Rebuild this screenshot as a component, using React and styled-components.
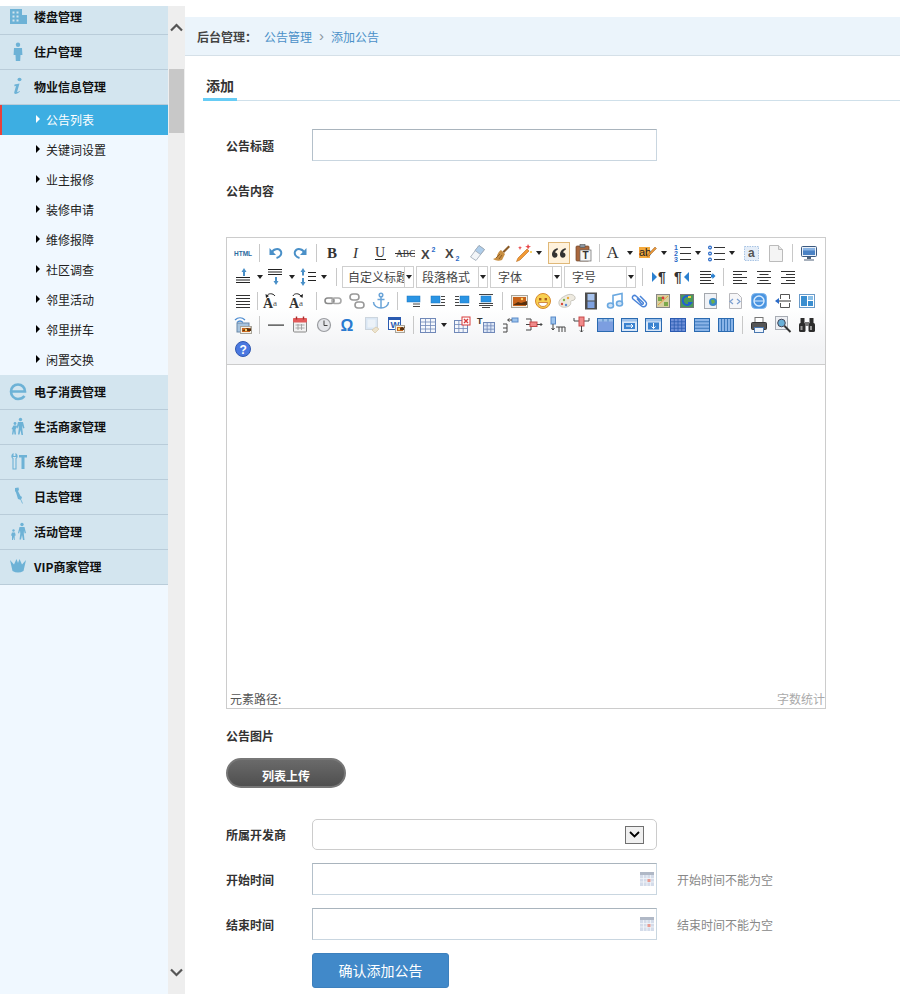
import React from "react";
import styled, { createGlobalStyle } from "styled-components";

const FONT = '"Noto Sans CJK SC", "Liberation Sans", sans-serif';

const GlobalStyle = createGlobalStyle`
  html, body {
    margin: 0;
    padding: 0;
    background: #fff;
  }
  body {
    font-family: ${FONT};
    font-size: 12px;
    color: #333;
  }
  * {
    box-sizing: border-box;
  }
`;

// Layout
const Page = styled.div`
  display: flex;
  width: 900px;
  height: 1000px;
  padding: 6px 0;
  overflow: hidden;
`;
const Sidebar = styled.aside`
  width: 168px;
  background: #f0f8ff;
  overflow: hidden;
`;
const MenuList = styled.div`
  margin-top: -6px;
`;
const MenuHeader = styled.div`
  display: flex;
  align-items: center;
  height: 35px;
  padding: 0 0 2px 9px;
  background: #d3e5ef;
  border-bottom: 1px solid #b9ccd9;
  font-weight: 700;
  color: #111;
`;
const MenuIcon = styled.span`
  display: flex;
  width: 25px;
  flex: none;
`;
const MenuItem = styled.div`
  display: flex;
  align-items: center;
  height: 30px;
  padding-bottom: 2px;
  padding-left: ${(p) => (p.$active ? "34px" : "36px")};
  background: ${(p) => (p.$active ? "#3daee2" : "transparent")};
  border-left: ${(p) => (p.$active ? "2px solid #e8403a" : "none")};
  color: ${(p) => (p.$active ? "#fff" : "#222")};
  &::before {
    content: "";
    width: 0;
    height: 0;
    margin-right: 6px;
    border-left: 4px solid ${(p) => (p.$active ? "#fff" : "#000")};
    border-top: 4px solid transparent;
    border-bottom: 4px solid transparent;
  }
`;
const ScrollTrack = styled.div`
  display: flex;
  flex-direction: column;
  justify-content: space-between;
  width: 17px;
  background: #eeeeee;
`;
const ScrollButton = styled.div`
  display: flex;
  align-items: center;
  justify-content: center;
  height: 43px;
`;
const ScrollThumb = styled.div`
  width: 15px;
  height: 64px;
  margin: 20px 1px 0;
  background: #c8c8c8;
`;
const ScrollGap = styled.div`
  flex: 1;
`;
const Main = styled.main`
  flex: 1;
  padding-top: 11px;
`;
const Breadcrumb = styled.div`
  display: flex;
  align-items: center;
  height: 39px;
  padding-left: 12px;
  background: #ebf4fb;
  border-bottom: 1px solid #d5e0e8;
  color: #4a90c8;
`;
const CrumbLead = styled.strong`
  width: 67px;
  color: #444;
`;
const CrumbSep = styled.span`
  width: 19px;
  text-align: center;
  font-size: 15px;
  line-height: 12px;
  color: #8a94a0;
  font-family: "Liberation Sans", sans-serif;
`;
const TabBar = styled.div`
  display: flex;
  height: 45px;
  margin-left: 18px;
  align-items: flex-end;
  border-bottom: 1px solid #cfe0ea;
`;
const Tab = styled.div`
  width: 34px;
  height: 30px;
  margin-bottom: -1px;
  padding-top: 4px;
  border-bottom: 3px solid #66ccf5;
  text-align: center;
  font-size: 14px;
  font-weight: 700;
  line-height: 21px;
  color: #333;
`;
const Form = styled.form`
  padding: 28px 0 0 41px;
`;
const FieldRow = styled.div`
  display: flex;
  align-items: center;
  margin-top: ${(p) => p.$top ?? 13}px;
`;
const Label = styled.label`
  width: 86px;
  flex: none;
  font-weight: 700;
  color: #333;
`;
const BlockLabel = styled.div`
  margin-top: ${(p) => p.$top}px;
  font-weight: 700;
  line-height: 16px;
  color: #333;
`;
const InputBox = styled.div`
  display: flex;
  align-items: center;
  width: 345px;
  height: 32px;
  padding-right: 2px;
  border: 1px solid #c9d6e0;
  border-top-color: #a9b4bd;
  border-left-color: #b4c0ca;
`;
const TextInput = styled.input`
  flex: 1;
  min-width: 0;
  height: 100%;
  border: none;
  outline: none;
  background: transparent;
`;
const SelectBox = styled.div`
  display: flex;
  align-items: center;
  width: 345px;
  height: 31px;
  padding-right: 12px;
  border: 1px solid #cccccc;
  border-radius: 5px;
`;
const SelectInput = styled.select`
  flex: 1;
  height: 100%;
  border: none;
  outline: none;
  background: transparent;
  appearance: none;
`;
const SelectArrow = styled.span`
  display: flex;
  align-items: center;
  justify-content: center;
  width: 19px;
  height: 18px;
  border: 1px solid #707070;
  background: #f0f0f0;
`;
const Hint = styled.span`
  margin-left: 20px;
  color: #888;
`;
const UploadButton = styled.button`
  display: block;
  width: 120px;
  height: 30px;
  margin-top: 14px;
  padding: 4px 0 0;
  border: 2px solid #777;
  border-radius: 15px;
  background: linear-gradient(#6a6a6a, #4f4f4f);
  color: #fff;
  font: 700 12px ${FONT};
`;
const SubmitButton = styled.button`
  display: block;
  width: 137px;
  height: 35px;
  margin: 13px 0 0 86px;
  padding: 0 0 2px;
  border: 1px solid #3d80bd;
  border-radius: 3px;
  background: #4189c9;
  color: #fff;
  font: 14px ${FONT};
`;

// Editor
const Editor = styled.div`
  display: flex;
  flex-direction: column;
  width: 600px;
  height: 472px;
  margin-top: 38px;
  border: 1px solid #cccccc;
`;
const Toolbar = styled.div`
  padding: 3px 0 3px 4px;
  background: linear-gradient(#fff 55%, #f2f3f5 88%);
  border-bottom: 1px solid #cccccc;
`;
const ToolRow = styled.div`
  display: flex;
  align-items: center;
  height: 24px;
  padding-left: ${(p) => p.$inset || 0}px;
`;
const Tool = styled.span`
  display: flex;
  align-items: center;
  justify-content: center;
  flex: none;
  width: ${(p) => p.$w || 24}px;
  height: 24px;
`;
const QuoteFrame = styled.span`
  display: flex;
  align-items: center;
  justify-content: center;
  width: 22px;
  height: 22px;
  background: #fff2dc;
  border: 1px solid #e0b878;
`;
const SplitTool = styled.span`
  display: flex;
  align-items: center;
  flex: none;
  width: ${(p) => p.$w}px;
  height: 24px;
  &::after {
    content: "";
    width: 0;
    height: 0;
    margin-left: 3px;
    border-top: 4px solid #222;
    border-left: 3.5px solid transparent;
    border-right: 3.5px solid transparent;
  }
`;
const ToolSep = styled.span`
  flex: none;
  display: flex;
  justify-content: center;
  width: ${(p) => p.$w}px;
  &::before {
    content: "";
    width: 1px;
    height: 18px;
    background: #c8c8c8;
  }
`;
const ComboBox = styled.span`
  display: flex;
  flex: none;
  width: 72px;
  height: 22px;
  margin-right: 2px;
  border: 1px solid #cfcfcf;
  background: #fff;
  color: #444;
  line-height: 20px;
  font-size: 12px;
`;
const ComboText = styled.span`
  flex: 1;
  min-width: 0;
  padding-left: ${(p) => (p.$tight ? 5 : 7)}px;
  overflow: hidden;
  white-space: nowrap;
`;
const ComboArrow = styled.span`
  display: flex;
  align-items: center;
  justify-content: center;
  width: 9px;
  flex: none;
  border-left: 1px solid #cfcfcf;
  &::after {
    content: "";
    border-top: 4px solid #222;
    border-left: 3px solid transparent;
    border-right: 3px solid transparent;
  }
`;
const EditArea = styled.div`
  flex: 1;
  background: #fff;
`;
const StatusBar = styled.div`
  display: flex;
  justify-content: space-between;
  height: 18px;
  padding-left: 3px;
  line-height: 18px;
  color: #555;
`;
const WordCount = styled.span`
  color: #aaa;
`;

// Small drawing helpers for the toolbar sprites
const Lines = ({ x = 3, w = 14, ys = [], c = "#333", sw = 1 }) => (
  <g stroke={c} strokeWidth={sw}>
    {ys.map((y, i) => {
      const [lx, lw] = Array.isArray(y) ? [y[1], y[2]] : [x, w];
      const ly = Array.isArray(y) ? y[0] : y;
      return <line key={i} x1={lx} x2={lx + lw} y1={ly + 0.5} y2={ly + 0.5} />;
    })}
  </g>
);
const T = ({ x, y, s = 12, f = "Liberation Serif", w = 400, c = "#333", i, children }) => (
  <text x={x} y={y} fontSize={s} fontFamily={f} fontWeight={w} fontStyle={i ? "italic" : "normal"} fill={c}>
    {children}
  </text>
);
const Grid = ({ x = 3, y = 4, w = 14, h = 12, c = "#7088b8", fill = "#eef2fa", cols = 3, rows = 3 }) => (
  <g stroke={c} fill="none">
    <rect x={x + 0.5} y={y + 0.5} width={w} height={h} fill={fill} />
    {Array.from({ length: cols - 1 }, (_, i) => {
      const lx = x + 0.5 + ((i + 1) * w) / cols;
      return <line key={i} x1={lx} x2={lx} y1={y} y2={y + h} strokeWidth="0.8" />;
    })}
    {Array.from({ length: rows - 1 }, (_, i) => {
      const ly = y + 0.5 + ((i + 1) * h) / rows;
      return <line key={i} x1={x} x2={x + w} y1={ly} y2={ly} strokeWidth="0.8" />;
    })}
  </g>
);
const Photo = ({ x = 2, y = 4, w = 16, h = 12 }) => (
  <g>
    <rect x={x + 0.5} y={y + 0.5} width={w} height={h} fill="#f4f0e6" stroke="#a8a49a" />
    <rect x={x + 2} y={y + 2} width={w - 3} height={h - 3} fill="#c8641c" />
    <path d={`M${x + 2} ${y + h - 2}l5-3 3 1 ${w - 10}-2v4z`} fill="#58300f" />
    <circle cx={x + w - 5} cy={y + 4} r="1.2" fill="#ffd56a" />
  </g>
);
const ImgAlign = ({ rect, ys }) => (
  <g>
    <rect x={rect[0]} y={rect[1]} width={rect[2]} height={rect[3]} fill="#2a94e4" stroke="#1c74bc" strokeWidth="0.5" />
    <Lines ys={ys} c="#444" />
  </g>
);
// table frame with a paler header row, shared by the merge buttons
const MergeFrame = ({ children, fill = "#d8e6f8" }) => (
  <g>
    <rect x="1.5" y="3.5" width="16" height="13" fill={fill} stroke="#2a6ab0" />
    <rect x="2" y="4" width="15" height="2.5" fill="#9cc0ea" />
    {children}
  </g>
);

const blue = "#4a90c8";
const ICONS = {
  html: <T x="1" y="12.5" s="6.5" f="Liberation Sans" w={700} c="#2a6a9e">HTML</T>,
  undo: (
    <g fill="none" stroke={blue} strokeWidth="2">
      <path d="M6 10C6.5 6 13 4.5 15 8.5c1 3-1 5.5-4.5 6.5" />
      <path d="M3.5 5v7H10z" fill={blue} stroke="none" />
    </g>
  ),
  redo: (
    <g fill="none" stroke={blue} strokeWidth="2">
      <path d="M14 10C13.5 6 7 4.5 5 8.5c-1 3 1 5.5 4.5 6.5" />
      <path d="M16.5 5v7H10z" fill={blue} stroke="none" />
    </g>
  ),
  bold: <T x="4" y="15" s="15" w={700}>B</T>,
  italic: <T x="6" y="15" s="15" i>I</T>,
  underline: (
    <g>
      <T x="4" y="14" s="14">U</T>
      <rect x="4" y="16" width="11" height="1" fill="#222" />
    </g>
  ),
  strike: (
    <g>
      <T x="1" y="14" s="9.5">ABC</T>
      <rect x="0" y="10" width="20" height="1" fill="#333" />
    </g>
  ),
  sup: (
    <g>
      <T x="2" y="15.5" s="13" f="Liberation Sans" w={700} c="#444">X</T>
      <T x="12.5" y="9" s="7" f="Liberation Sans" w={700} c="#2a6ac8">2</T>
    </g>
  ),
  sub: (
    <g>
      <T x="2" y="14.5" s="13" f="Liberation Sans" w={700} c="#444">X</T>
      <T x="12.5" y="17.5" s="7" f="Liberation Sans" w={700} c="#2a6ac8">2</T>
    </g>
  ),
  eraser: (
    <g stroke="#9aa6b2" strokeWidth="0.8">
      <path d="M12 2.5l5.5 4L9 17.5 3.5 14z" fill="#f2f5f8" />
      <path d="M12 2.5l5.5 4-4 5-5.5-4z" fill="#aecdea" />
    </g>
  ),
  brush: (
    <g>
      <path d="M17.5 2.5l-6 6 1.5 1.5 6-6z" fill="#8a5a26" />
      <path d="M10 7l4 4-3 6c-3 1-6 1-9-1 3-1 4-2 4-3s2-5 4-6z" fill="#c98f42" />
      <path d="M5 15l4-4M8 16l3-4" stroke="#7a5022" strokeWidth="0.8" />
    </g>
  ),
  wand: (
    <g>
      <path d="M14 6l2 2-9 9-3.5 1.5L5 15z" fill="#f29a34" stroke="#b86a1c" strokeWidth="0.6" />
      <path d="M15 1l1 2 2 .5-2 1-1 2-.8-2-2-1 2-.5zM7 3l.7 1.3 1.3.5-1.3.5L7 7l-.7-1.7L5 4.8l1.3-.5z" fill="#e8484a" />
      <circle cx="18" cy="9" r="1" fill="#f5c23a" />
    </g>
  ),
  quote: (
    <g fill="#333">
      <path d="M8.5 5C5.5 6 3 8 3 11.5c0 2 1.2 3.2 2.8 3.2s2.7-1.1 2.7-2.7-1-2.5-2.4-2.5c.2-1.2 1.3-2.2 2.8-3zM16.5 5c-3 1-5.5 3-5.5 6.5 0 2 1.2 3.2 2.8 3.2s2.7-1.1 2.7-2.7-1-2.5-2.4-2.5c.2-1.2 1.3-2.2 2.8-3z" />
    </g>
  ),
  paste: (
    <g>
      <rect x="3" y="3" width="13" height="15" rx="1" fill="#a9683f" stroke="#6d4325" strokeWidth="0.7" />
      <rect x="7" y="1.5" width="5" height="3" fill="#8c97a2" stroke="#555" strokeWidth="0.6" />
      <rect x="7" y="7" width="11" height="11" fill="#f6f6f6" stroke="#666" strokeWidth="0.7" />
      <T x="9.5" y="16" s="10" f="Liberation Sans" w={700}>T</T>
    </g>
  ),
  fontColor: <T x="2.5" y="15" s="17">A</T>,
  backColor: (
    <g>
      <rect x="1" y="4" width="11" height="11" fill="#f3a93c" />
      <T x="1" y="13" s="11" f="Liberation Sans" c="#222">ab</T>
      <path d="M17 4l1.5 1.5L11 13l-2 .8.6-2z" fill="#e8963a" stroke="#9a6020" strokeWidth="0.5" />
    </g>
  ),
  ol: (
    <g>
      <T x="2" y="7" s="7" f="Liberation Sans" w={700} c="#2a6ac8">1</T>
      <T x="2" y="13" s="7" f="Liberation Sans" w={700} c="#2a6ac8">2</T>
      <T x="2" y="19" s="7" f="Liberation Sans" w={700} c="#2a6ac8">3</T>
      <Lines x={8} w={11} ys={[4, 10, 16]} />
    </g>
  ),
  ul: (
    <g>
      <g fill="#fff" stroke="#2a6ac8" strokeWidth="1.2">
        <circle cx="4" cy="4.5" r="1.4" />
        <circle cx="4" cy="10.5" r="1.4" />
        <circle cx="4" cy="16.5" r="1.4" />
      </g>
      <Lines x={8} w={11} ys={[4, 10, 16]} />
    </g>
  ),
  selectAll: (
    <g>
      <rect x="2.5" y="3.5" width="14" height="14" fill="#e4edf8" stroke="#a8c4e4" strokeDasharray="1.5 1" />
      <T x="6" y="14" s="12" f="Liberation Sans" w={700} c="#555">a</T>
    </g>
  ),
  newDoc: (
    <g>
      <path d="M3.5 2.5h9l4 4v12h-13z" fill="#f4f4f4" stroke="#bbb" />
      <path d="M12.5 2.5v4h4" fill="#e4e4e4" stroke="#bbb" />
    </g>
  ),
  monitor: (
    <g>
      <rect x="2.5" y="3.5" width="15" height="10" rx="1" fill="#eaf0f8" stroke="#3c5a80" />
      <rect x="4" y="5" width="12" height="7" fill="#4b82c4" />
      <rect x="4" y="5" width="12" height="2.5" fill="#8ab4e4" />
      <path d="M8 14h4v2H8zM5 16.5h10v1H5z" fill="#51637a" />
    </g>
  ),
  spaceTop: (
    <g>
      <path d="M10 1l2.5 4H11v4H9V5H7.5z" fill={blue} />
      <Lines x={2} w={14} ys={[10, 12.5, 15]} c="#222" />
    </g>
  ),
  spaceBottom: (
    <g>
      <Lines x={2} w={14} ys={[2, 4.5, 7]} c="#222" />
      <path d="M9 10h2v4h1.500L10 18l-2.500-4H9z" fill={blue} />
    </g>
  ),
  lineHeight: (
    <g>
      <path d="M5 1l2.500 4H6v3.500H4V5H2.500zM4 11h2v4h1.500L5 19l-2.500-4H4z" fill={blue} />
      <Lines x={10} w={8} ys={[5, 9, 13]} c="#222" />
    </g>
  ),
  ltr: (
    <g>
      <path d="M3 5l5 5-5 5z" fill="#2a80d0" />
      <T x="9" y="15" s="14" f="Liberation Sans" w={700}>¶</T>
    </g>
  ),
  rtl: (
    <g>
      <T x="1" y="15" s="14" f="Liberation Sans" w={700}>¶</T>
      <path d="M16 5l-5 5 5 5z" fill="#2a80d0" />
    </g>
  ),
  indent: (
    <g>
      <Lines x={3} w={11} ys={[4, 7, 10, 13]} />
      <Lines x={3} w={14} ys={[16]} />
      <path d="M14 7.5h1.5V6l3 3-3 3v-1.5H14z" fill="#2a80d0" />
    </g>
  ),
  alignLeft: <Lines ys={[[4, 3, 14], [7, 3, 9], [10, 3, 14], [13, 3, 9], [16, 3, 14]]} />,
  alignCenter: <Lines ys={[[4, 3, 14], [7, 5.5, 9], [10, 3, 14], [13, 5.5, 9], [16, 3, 14]]} />,
  alignRight: <Lines ys={[[4, 3, 14], [7, 8, 9], [10, 3, 14], [13, 8, 9], [16, 3, 14]]} />,
  justify: <Lines ys={[4, 7, 10, 13, 16]} />,
  fontUp: (
    <g>
      <T x="1" y="17" s="14" w={700}>A</T>
      <T x="11" y="15" s="9" c="#555">a</T>
      <path d="M5 5c1-3 6-3 8 0" fill="none" stroke="#222" strokeWidth="1" />
      <path d="M3.5 3l.5 4 3-2z" fill="#222" />
    </g>
  ),
  fontDown: (
    <g>
      <T x="1" y="17" s="14" w={700}>A</T>
      <T x="11" y="15" s="9" c="#555">a</T>
      <path d="M5 5c1-3 6-3 8 0" fill="none" stroke="#222" strokeWidth="1" />
      <path d="M15 3l-.5 4-3-2z" fill="#222" />
    </g>
  ),
  link: (
    <g fill="none">
      <rect x="2" y="7" width="9" height="5.5" rx="2.7" stroke="#8a8a8a" strokeWidth="1.6" />
      <rect x="9" y="7" width="9" height="5.5" rx="2.7" stroke="#a8a8a8" strokeWidth="1.6" />
    </g>
  ),
  unlink: (
    <g fill="none" stroke="#999" strokeWidth="1.6">
      <rect x="3" y="3" width="9" height="6" rx="3" />
      <rect x="8" y="11" width="9" height="6" rx="3" />
    </g>
  ),
  anchor: (
    <g fill="none" stroke="#6aa4d8" strokeWidth="1.5">
      <circle cx="10" cy="4" r="1.8" />
      <path d="M10 6v11M6.5 8.5h7M2.5 11c0 4 4 6 7.5 6s7.500-2 7.500-6" />
    </g>
  ),
  imgNone: <ImgAlign rect={[3, 5, 13, 6]} ys={[[12.5, 9, 7], [15, 9, 7]]} />,
  imgLeft: <ImgAlign rect={[3, 5, 9, 7]} ys={[[5, 13, 4], [8, 13, 4], [11, 13, 4], [14, 3, 14]]} />,
  imgRight: <ImgAlign rect={[8, 5, 9, 7]} ys={[[5, 3, 4], [8, 3, 4], [11, 3, 4], [14, 3, 14]]} />,
  imgCenter: <ImgAlign rect={[5, 5, 10, 6]} ys={[[3, 3, 14], [12, 3, 14], [14, 3, 14], [16, 6, 8]]} />,
  image: <Photo />,
  emoji: (
    <g>
      <circle cx="10" cy="10" r="7.5" fill="#f8d050" stroke="#d8882c" />
      <rect x="6" y="7" width="2.4" height="2.4" fill="#a85a1c" />
      <rect x="11.6" y="7" width="2.4" height="2.4" fill="#a85a1c" />
      <path d="M5.5 11.5h9c0 2.5-2 4-4.5 4s-4.500-1.500-4.500-4z" fill="#fff" stroke="#c8702c" strokeWidth="0.8" />
    </g>
  ),
  palette: (
    <g>
      <path d="M10 4c5-2 9 1 8 4-1 2-3 1-4 2s1 3-2 5-9 2-10-2 3-7 8-9z" fill="#eeeae0" stroke="#b8b4aa" strokeWidth="0.7" />
      <circle cx="7" cy="9" r="1.2" fill="#7fb24a" />
      <circle cx="11" cy="7" r="1.2" fill="#e8a83a" />
      <circle cx="5" cy="13" r="1.2" fill="#d84a3a" />
      <circle cx="9" cy="14" r="1.2" fill="#5a8ad0" />
    </g>
  ),
  film: (
    <g>
      <rect x="4" y="1.5" width="12" height="17" fill="#4d4d4d" />
      <rect x="6.5" y="3" width="7" height="6.5" fill="#a8c4ee" />
      <rect x="6.5" y="10.5" width="7" height="6.5" fill="#7fa2e0" />
    </g>
  ),
  music: (
    <g fill="none" stroke="#6aa8e0" strokeWidth="1.6">
      <path d="M8 14V4.5l9-2V12" />
      <ellipse cx="5.5" cy="14.5" rx="3" ry="2.5" fill="#cfe2f6" />
      <ellipse cx="14.5" cy="12.5" rx="3" ry="2.5" fill="#cfe2f6" />
    </g>
  ),
  clip: (
    <path d="M15 11l-5.500 5.500a3 3 0 0 1-4.500-4L12 4a2 2 0 0 1 3 3l-6.500 7a1 1 0 0 1-1.500-1.500L12.500 8" fill="none" stroke="#4a84d8" strokeWidth="1.5" transform="rotate(-90 10 10)" />
  ),
  map: (
    <g>
      <rect x="3.5" y="3.5" width="13" height="13" fill="#d8d0a0" stroke="#888" />
      <path d="M5 6h4v4H5zM11 11h4v4h-4z" fill="#7ca84a" />
      <path d="M5 14l10-9" stroke="#e8a040" />
      <circle cx="10" cy="7" r="1.4" fill="#d83a3a" />
    </g>
  ),
  gmap: (
    <g>
      <rect x="3.5" y="3.5" width="13" height="13" fill="#4a9a5a" stroke="#777" />
      <path d="M13 6a4.500 4.500 0 1 0 1 6h-3" fill="none" stroke="#2060d0" strokeWidth="2" />
      <rect x="11" y="5" width="3" height="2" fill="#f0d040" />
    </g>
  ),
  iframe: (
    <g>
      <rect x="3.5" y="2.5" width="12" height="15" fill="#f0f2f6" stroke="#a4a8ae" />
      <circle cx="12" cy="11" r="4" fill="#3a88c8" />
      <path d="M10 9l3-.5 1 3-3 1.500z" fill="#6cb04a" />
    </g>
  ),
  codeDoc: (
    <g>
      <path d="M4.500 2.500h8l4 4v11h-12z" fill="#f6f6f8" stroke="#b8b8bc" />
      <path d="M8 8l-3 2.500L8 13M12 8l3 2.500-3 2.500" fill="none" stroke="#7a9ed0" strokeWidth="1.2" />
    </g>
  ),
  webapp: (
    <g>
      <rect x="2.5" y="2.5" width="15" height="15" rx="4" fill="#4a94e0" stroke="#7ab4ec" />
      <circle cx="10" cy="10" r="5" fill="none" stroke="#d8ecff" strokeWidth="1.4" />
      <path d="M5 10h10" stroke="#d8ecff" />
    </g>
  ),
  pagebreak: (
    <g>
      <path d="M7.500 8V3.500h9V8M7.500 12v4.500h9V12" fill="none" stroke="#555" />
      <Lines x={6} w={12} ys={[9.5]} c="#333" />
      <path d="M2 10l4-3v6z" fill="#2a6ac8" />
    </g>
  ),
  template: (
    <g>
      <rect x="2.5" y="3.5" width="15" height="13" fill="#fff" stroke="#6a9ac8" />
      <rect x="4" y="5" width="6" height="10" fill="#3a8ed0" />
      <rect x="11" y="5" width="5" height="4" fill="#8ac0e8" />
      <rect x="11" y="10" width="5" height="5" fill="#3a8ed0" />
    </g>
  ),
  snap: (
    <g>
      <path d="M2 5c3-3 7-3 10 0M4 7.500c2-2 4-2 6 0" fill="none" stroke="#4a8ad0" strokeWidth="1.2" />
      <rect x="4" y="8" width="12" height="9" fill="#a8c4de" stroke="#6a88a8" />
      <Photo x={7} y={11} w={11} h={7} />
    </g>
  ),
  hr: <rect x="2" y="9.5" width="16" height="1.2" fill="#333" />,
  date: (
    <g>
      <rect x="3.5" y="3.5" width="13" height="13.5" rx="1" fill="#f2f2f2" stroke="#888" />
      <rect x="3" y="3" width="14" height="4.5" rx="1" fill="#e25a5a" />
      <path d="M6.500 1.500v3M13.500 1.500v3" stroke="#a83030" strokeWidth="1.4" />
      <path d="M5.500 10h9M5.500 13h9M8 9v6M11.500 9v6" stroke="#999" strokeWidth="0.8" />
    </g>
  ),
  time: (
    <g>
      <circle cx="10" cy="10" r="6.5" fill="#e4e6ea" stroke="#9a9ca0" strokeWidth="1.2" />
      <path d="M10 5.500V10.500H13.500" fill="none" stroke="#444" />
    </g>
  ),
  omega: <T x="2.5" y="16" s="16" f="Liberation Sans" w={700} c="#2a7ad0">Ω</T>,
  linkImage: (
    <g opacity="0.75">
      <rect x="3.5" y="2.5" width="12" height="12" fill="#cfe0f2" stroke="#bcc8d4" />
      <rect x="5.5" y="4.5" width="8" height="8" fill="#e8f0f8" />
      <path d="M10 15l4-3 3 2-4 4z" fill="#e8dcc0" stroke="#d0b888" strokeWidth="0.7" />
    </g>
  ),
  word: (
    <g>
      <rect x="2.5" y="2.5" width="12" height="12" fill="#fff" stroke="#2a5ab0" />
      <rect x="2.5" y="2.5" width="12" height="2.5" fill="#2a5ab0" />
      <T x="4.5" y="13" s="9.5" f="Liberation Sans" w={700} c="#2a5ab0">W</T>
      <Photo x={9} y={10} w={9} h={7} />
    </g>
  ),
  table: <Grid x={2} y={3} w={15} h={14} fill="#f4f7fc" cols={3} rows={4} />,
  delTable: (
    <g>
      <Grid x={2} y={5} w={13} h={12} fill="#f4f7fc" />
      <rect x="10" y="2" width="8" height="8" fill="#fff" stroke="#d83a3a" />
      <path d="M12 4l4 4M16 4l-4 4" stroke="#d83a3a" strokeWidth="1.4" />
    </g>
  ),
  tableTitle: (
    <g>
      <T x="1" y="9" s="9" f="Liberation Sans" w={700}>T</T>
      <Grid x={7} y={7} w={11} h={10} fill="#dce6f6" />
    </g>
  ),
  insertCol: (
    <g>
      <path d="M3 9h4v8H3M3 13h4" fill="none" stroke="#444" />
      <rect x="12" y="3" width="6" height="4" fill="#9cc4ee" stroke="#5a8ac8" />
      <path d="M12 5H8M9.500 3.500L7.500 5l2 1.500" fill="none" stroke="#444" />
    </g>
  ),
  insertRow: (
    <g>
      <path d="M2 4h5v11H2M2 9.500h5" fill="none" stroke="#444" />
      <rect x="6" y="7" width="7" height="4.5" fill="#ef8a8a" stroke="#c84a4a" />
      <path d="M13 9.500h5M16.500 8l1.500 1.500-1.500 1.500" fill="none" stroke="#444" />
    </g>
  ),
  insertRow2: (
    <g>
      <rect x="3" y="2" width="4.5" height="7" fill="#9cc4ee" stroke="#5a8ac8" />
      <path d="M5 9v6M8 12h9v5M11 12v5M14 12v5" fill="none" stroke="#444" />
      <path d="M3.500 13L5 15l1.500-2" fill="none" stroke="#444" />
    </g>
  ),
  deleteCol: (
    <g>
      <path d="M2 3v3h15V3" fill="none" stroke="#444" />
      <rect x="7" y="2" width="5" height="9" fill="#ef8a8a" stroke="#c84a4a" />
      <path d="M9.500 11v6M8 15.500L9.500 17l1.500-1.500" fill="none" stroke="#444" />
    </g>
  ),
  merge: (
    <MergeFrame fill="#7c9ee0">
      <path d="M7 4v2.500M12 4v2.500" stroke="#2a6ab0" strokeWidth="0.7" />
    </MergeFrame>
  ),
  mergeRight: (
    <MergeFrame>
      <rect x="4" y="8" width="11" height="6" fill="#3a82d0" />
      <path d="M6 11h7M11 9l2 2-2 2" fill="none" stroke="#fff" />
    </MergeFrame>
  ),
  mergeDown: (
    <MergeFrame>
      <rect x="4" y="7.5" width="11" height="7" fill="#3a82d0" />
      <path d="M9.500 8v5.500M7.500 11.500l2 2 2-2" fill="none" stroke="#fff" />
    </MergeFrame>
  ),
  split: <Grid x={2} y={3} w={15} h={13} fill="#7090d8" c="#2a5ab0" cols={4} rows={4} />,
  splitRows: <Grid x={2} y={3} w={15} h={13} fill="#8ab4e8" c="#2a6ab0" cols={1} rows={4} />,
  splitCols: <Grid x={2} y={3} w={15} h={13} fill="#8ab4e8" c="#2a6ab0" cols={5} rows={1} />,
  print: (
    <g>
      <rect x="6" y="2.5" width="8" height="5" fill="#fff" stroke="#777" />
      <rect x="2.5" y="7.5" width="15" height="7" rx="1" fill="#555" stroke="#333" />
      <rect x="5.5" y="12.5" width="9" height="5" fill="#eef4fb" stroke="#4a78b0" />
    </g>
  ),
  preview: (
    <g>
      <rect x="2.5" y="1.5" width="12" height="13" fill="#eef0f4" stroke="#a8acb4" />
      <circle cx="8.5" cy="8" r="3.8" fill="#6ab0d8" stroke="#445" />
      <path d="M11.500 11l6 6" stroke="#333" strokeWidth="2" />
    </g>
  ),
  search: (
    <g fill="#2c2c2c">
      <rect x="2" y="8" width="6.5" height="9" rx="1.5" />
      <rect x="11.5" y="8" width="6.5" height="9" rx="1.5" />
      <rect x="3.5" y="3" width="4" height="6" />
      <rect x="12.5" y="3" width="4" height="6" />
      <rect x="8" y="7" width="4" height="4" fill="#777" />
      <rect x="3.5" y="11" width="2" height="4" fill="#999" />
      <rect x="13" y="11" width="2" height="4" fill="#999" />
    </g>
  ),
  help: (
    <g>
      <circle cx="10" cy="10" r="7.5" fill="#4a78e0" stroke="#3058b0" />
      <T x="6.5" y="14.5" s="12" f="Liberation Sans" w={700} c="#fff">?</T>
    </g>
  ),
};

const Sprite = ({ name }) => (
  <svg width="20" height="20" viewBox="0 0 20 20" aria-hidden="true">
    {ICONS[name]}
  </svg>
);

const sep = (w = 9) => ({ sep: w });
const drop = (name, w = 32) => ({ drop: name, w });
const wide = (name, w) => ({ name, w });
const combo = (label, tight) => ({ combo: label, tight });

const TOOL_ROWS = [
  {
    items: [
      "html", sep(), "undo", "redo", sep(), "bold", "italic", "underline", "strike", "sup", "sub", "eraser", "brush",
      drop("wand", 34), "quote", "paste", sep(), drop("fontColor", 34), drop("backColor", 34), drop("ol", 34), drop("ul", 34),
      "selectAll", "newDoc", sep(), "monitor",
    ],
  },
  {
    inset: 3,
    items: [
      drop("spaceTop"), drop("spaceBottom"), drop("lineHeight"), sep(12),
      combo("自定义标题", true), combo("段落格式", true), combo("字体"), combo("字号"),
      sep(), "ltr", "rtl", "indent", sep(), "alignLeft", "alignCenter", "alignRight",
    ],
  },
  {
    items: [
      "justify", sep(5), "fontUp", wide("fontDown", 28), sep(), "link", "unlink", "anchor", sep(),
      "imgNone", "imgLeft", "imgRight", "imgCenter", sep(), "image", "emoji", "palette", "film", "music", "clip",
      "map", "gmap", "iframe", "codeDoc", "webapp", "pagebreak", "template",
    ],
  },
  {
    items: [
      "snap", sep(), "hr", "date", "time", "omega", "linkImage", "word", sep(10), drop("table"),
      "delTable", "tableTitle", "insertCol", "insertRow", "insertRow2", "deleteCol", "merge", "mergeRight", "mergeDown",
      "split", "splitRows", "splitCols", sep(), "print", "preview", "search",
    ],
  },
  { items: ["help"] },
];

const renderTool = (item, key) => {
  if (typeof item === "string") {
    return (
      <Tool key={key}>
        {item === "quote" ? (
          <QuoteFrame>
            <Sprite name="quote" />
          </QuoteFrame>
        ) : (
          <Sprite name={item} />
        )}
      </Tool>
    );
  }
  if (item.sep) return <ToolSep key={key} $w={item.sep} />;
  if (item.drop) {
    return (
      <SplitTool key={key} $w={item.w}>
        <Sprite name={item.drop} />
      </SplitTool>
    );
  }
  if (item.combo) {
    return (
      <ComboBox key={key}>
        <ComboText $tight={item.tight}>{item.combo}</ComboText>
        <ComboArrow />
      </ComboBox>
    );
  }
  return (
    <Tool key={key} $w={item.w}>
      <Sprite name={item.name} />
    </Tool>
  );
};

// Sidebar glyphs
const SIDE = "#6db2d6";
const MENU_ICONS = {
  building: (
    <path d="M1 3h12v15H1zM13 9h5v9h-5zM3.5 5.5v2h2v-2zM7.5 5.5v2h2v-2zM3.5 9.5v2h2v-2zM7.5 9.5v2h2v-2zM3.5 13.5v2h2v-2zM7.5 13.5v2h2v-2z" fill={SIDE} fillRule="evenodd" />
  ),
  person: (
    <g fill={SIDE}>
      <circle cx="9" cy="3.8" r="2.2" />
      <path d="M5 7h8l.4 7h-1.900l-.3 6H6.800l-.3-6H4.600z" />
    </g>
  ),
  info: (
    <g fill={SIDE}>
      <ellipse cx="10.5" cy="3.5" rx="2" ry="1.8" />
      <path d="M5.500 8.500l5-1-2.300 8c-.2.8.5.8 2.300-.6l.5.6c-2.500 2.500-6 3.500-5.800 1l1.800-6.500-1.700.2z" />
    </g>
  ),
  ie: <path d="M3 10.500h13c0-4-3-7-7-7s-7 3-7 7 3 7.500 7 7.500c2.500 0 5-1 6.500-3" fill="none" stroke={SIDE} strokeWidth="2.6" />,
  people: (
    <g fill={SIDE}>
      <circle cx="11.500" cy="3.500" r="1.700" />
      <path d="M9 6h5l1.500 6-1.300.4-.7-2.900-.2 3 .7 6.500h-1.500L11.500 14l-1 4.500H9l.8-6-.3-3-1 3L7.500 12z" />
      <circle cx="6" cy="7.500" r="1.400" />
      <path d="M4.500 9.500h3l.5 1-1.500 3 .5 5H5.500L5 15l-.7 3.500H3l.7-5-1.200-.5z" />
    </g>
  ),
  tools: (
    <g fill="none" stroke={SIDE} strokeWidth="1.1">
      <path d="M4 3c-1.500 1-1.500 3.500 0 4.500v10.500h3V7.500C8.500 6.500 8.500 4 7 3v2.500H4z" />
      <path d="M10 4h8v2.500h-2.500V18h-3V6.500H10z" fill={SIDE} stroke="none" />
    </g>
  ),
  pin: (
    <g fill={SIDE}>
      <path d="M6 2l3.500-.5.5 2.500-1 1 2.500 5 1.500 1-1 3-3-1-2-6.500L6 5z" />
      <path d="M12 14l1.500 3.500" stroke={SIDE} strokeWidth="0.8" />
    </g>
  ),
  crowd: (
    <g fill={SIDE}>
      <circle cx="13" cy="3.500" r="1.700" />
      <path d="M10.500 6h5l1.500 6-1.300.4-.7-2.900-.2 3 .7 6.500H14L13 14l-1 4.500h-1.500l.8-6-.3-3-1 3L9 12z" />
      <circle cx="4.500" cy="9.500" r="1.200" />
      <path d="M3 11.500h3l.7 3-1 .3V19H5l-.5-3-.5 3H3v-4.200l-1-.3z" />
    </g>
  ),
  crown: <path d="M1 4l4 4.500L7.500 3 9 7l1.500-4L13 8.500 17 4l-2.500 11q-5.500 3-11 0z" fill={SIDE} />,
};

const MenuGlyph = ({ name }) => (
  <MenuIcon>
    <svg width="18" height="20" viewBox="0 0 18 20" aria-hidden="true">
      {MENU_ICONS[name]}
    </svg>
  </MenuIcon>
);

const Chevron = ({ up }) => (
  <svg width="13" height="9" viewBox="0 0 13 9" aria-hidden="true">
    <path d={up ? "M1 7.500l5.500-5.500 5.500 5.500" : "M1 1.500l5.500 5.500 5.500-5.500"} fill="none" stroke="#555" strokeWidth="2.2" />
  </svg>
);

const CalendarIcon = () => (
  <svg width="14" height="14" viewBox="0 0 14 14" aria-hidden="true">
    <rect width="14" height="14" fill="#d4dcea" />
    <rect width="14" height="3" fill="#b0b8c6" />
    <path d="M0 6.500h14M0 10h14M3.500 3v11M7 3v11M10.500 3v11" stroke="#f4f6fa" strokeWidth="0.8" />
    <rect x="7.5" y="7" width="3" height="3" fill="#e89a90" />
  </svg>
);

const MENU_TOP = [
  { icon: "building", label: "楼盘管理" },
  { icon: "person", label: "住户管理" },
  { icon: "info", label: "物业信息管理" },
];
const SUB_ITEMS = ["公告列表", "关键词设置", "业主报修", "装修申请", "维修报障", "社区调查", "邻里活动", "邻里拼车", "闲置交换"];
const MENU_BOTTOM = [
  { icon: "ie", label: "电子消费管理" },
  { icon: "people", label: "生活商家管理" },
  { icon: "tools", label: "系统管理" },
  { icon: "pin", label: "日志管理" },
  { icon: "crowd", label: "活动管理" },
  { icon: "crown", label: "VIP商家管理" },
];

const App = () => {
  const renderHeader = (m) => (
    <MenuHeader key={m.label}>
      <MenuGlyph name={m.icon} />
      {m.label}
    </MenuHeader>
  );

  return (
    <Page>
      <GlobalStyle />
      <Sidebar>
        <MenuList>
          {MENU_TOP.map(renderHeader)}
          {SUB_ITEMS.map((label, i) => (
            <MenuItem key={label} $active={i === 0}>
              {label}
            </MenuItem>
          ))}
          {MENU_BOTTOM.map(renderHeader)}
        </MenuList>
      </Sidebar>
      <ScrollTrack>
        <div>
          <ScrollButton>
            <Chevron up />
          </ScrollButton>
          <ScrollThumb />
        </div>
        <ScrollGap />
        <ScrollButton>
          <Chevron />
        </ScrollButton>
      </ScrollTrack>
      <Main>
        <Breadcrumb>
          <CrumbLead>后台管理：</CrumbLead>
          公告管理
          <CrumbSep>›</CrumbSep>
          添加公告
        </Breadcrumb>
        <TabBar>
          <Tab>添加</Tab>
        </TabBar>
        <Form>
          <FieldRow $top={0}>
            <Label>公告标题</Label>
            <InputBox>
              <TextInput />
            </InputBox>
          </FieldRow>
          <BlockLabel $top={22}>公告内容</BlockLabel>
          <Editor>
            <Toolbar>
              {TOOL_ROWS.map((row, r) => (
                <ToolRow key={r} $inset={row.inset}>
                  {row.items.map((item, i) => renderTool(item, i))}
                </ToolRow>
              ))}
            </Toolbar>
            <EditArea />
            <StatusBar>
              <span>元素路径:</span>
              <WordCount>字数统计</WordCount>
            </StatusBar>
          </Editor>
          <BlockLabel $top={19}>公告图片</BlockLabel>
          <UploadButton type="button">列表上传</UploadButton>
          <FieldRow $top={31}>
            <Label>所属开发商</Label>
            <SelectBox>
              <SelectInput />
              <SelectArrow>
                <svg width="11" height="7" viewBox="0 0 11 7" aria-hidden="true">
                  <path d="M1 1l4.500 4.500L10 1" fill="none" stroke="#000" strokeWidth="1.8" />
                </svg>
              </SelectArrow>
            </SelectBox>
          </FieldRow>
          <FieldRow>
            <Label>开始时间</Label>
            <InputBox>
              <TextInput />
              <CalendarIcon />
            </InputBox>
            <Hint>开始时间不能为空</Hint>
          </FieldRow>
          <FieldRow>
            <Label>结束时间</Label>
            <InputBox>
              <TextInput />
              <CalendarIcon />
            </InputBox>
            <Hint>结束时间不能为空</Hint>
          </FieldRow>
          <SubmitButton type="button">确认添加公告</SubmitButton>
        </Form>
      </Main>
    </Page>
  );
};

export default App;
